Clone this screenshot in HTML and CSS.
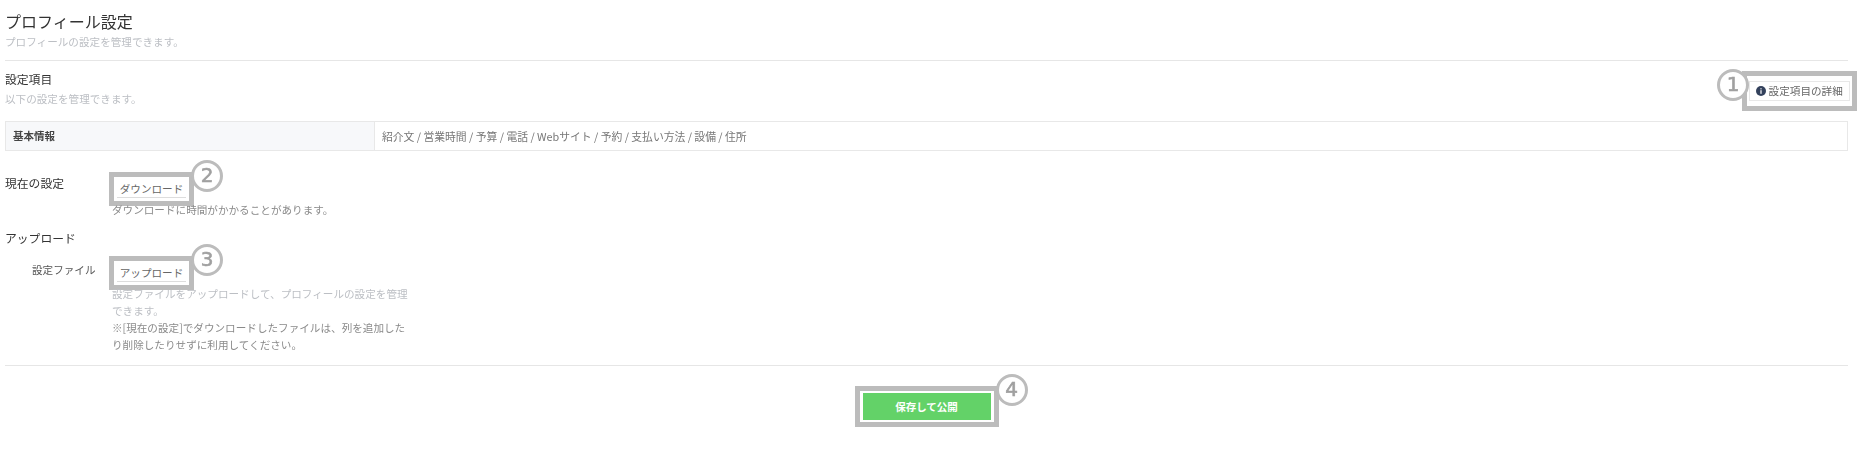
FILE: index.html
```html
<!DOCTYPE html>
<html lang="ja">
<head>
    <meta charset="UTF-8">
    <title>プロフィール設定</title>
    <link rel="stylesheet" href="styles.css">
</head>
<body>
    <div class="page">
        <div class="page-head">
            <h1>プロフィール設定</h1>
            <p class="note">プロフィールの設定を管理できます。</p>
        </div>

        <div class="items-head">
            <div>
                <h2>設定項目</h2>
                <p class="note">以下の設定を管理できます。</p>
            </div>
            <div class="mark mark-detail">
                <span class="num num-left">1</span>
                <button class="btn btn-detail" type="button">
                    <svg class="info" viewBox="0 0 10 10" width="10" height="10"><circle cx="5" cy="5" r="5" fill="#33415c"/><rect x="4.4" y="4.2" width="1.2" height="3.6" fill="#fff"/><rect x="4.4" y="2.2" width="1.2" height="1.2" fill="#fff"/></svg>
                    設定項目の詳細
                </button>
            </div>
        </div>

        <div class="info-table">
            <div class="info-label">基本情報</div>
            <div class="info-value">紹介文 / 営業時間 / 予算 / 電話 / Webサイト / 予約 / 支払い方法 / 設備 / 住所</div>
        </div>

        <div class="row row-current">
            <div class="row-label">現在の設定</div>
            <div class="row-body">
                <div class="mark mark-small">
                    <span class="num num-right">2</span>
                    <button class="btn" type="button">ダウンロード</button>
                </div>
                <p class="note note-dark">ダウンロードに時間がかかることがあります。</p>
            </div>
        </div>

        <h3>アップロード</h3>
        <div class="row row-upload">
            <div class="row-label row-label-sub">設定ファイル</div>
            <div class="row-body">
                <div class="mark mark-small">
                    <span class="num num-right">3</span>
                    <button class="btn" type="button">アップロード</button>
                </div>
                <p class="note help">設定ファイルをアップロードして、プロフィールの設定を管理できます。</p>
                <p class="note note-dark help">※[現在の設定]でダウンロードしたファイルは、列を追加したり削除したりせずに利用してください。</p>
            </div>
        </div>

        <div class="foot">
            <div class="mark mark-save">
                <span class="num num-right">4</span>
                <button class="btn-save" type="button">保存して公開</button>
            </div>
        </div>
    </div>
</body>
</html>
```

FILE: styles.css
```css
body {
    margin: 0;
    background-color: white;
    font-family: "Noto Sans CJK JP", "Noto Sans", sans-serif;
    color: #444;
    font-size: 10.5px;
}

.page {
    padding: 0 26px 0 5px;
    filter: blur(0.45px);
}

p {
    margin: 0;
}

h1 {
    font-weight: 400;
    font-size: 16px;
    line-height: 22px;
    margin: 0;
    color: #333;
}

h2 {
    font-weight: 400;
    font-size: 11.8px;
    line-height: 16px;
    margin: 0;
    color: #333;
}

h3 {
    font-weight: 400;
    font-size: 11.8px;
    line-height: 16px;
    margin: 12px 0 0;
    color: #333;
}

.note {
    font-size: 10.6px;
    line-height: 16.5px;
    color: #bcbfc4;
}

.note-dark {
    color: #8a8a8a;
}

.page-head {
    padding: 10px 0 9px;
    border-bottom: 1px solid #e6e6e6;
}

.page-head .note {
    margin-top: 2px;
}

.items-head {
    display: flex;
    justify-content: space-between;
    align-items: flex-start;
    padding-top: 10px;
    height: 50px;
}

.items-head .note {
    margin-top: 4px;
}

.info-table {
    display: flex;
    height: 30px;
    border: 1px solid #e8e8e8;
    box-sizing: border-box;
}

.info-label {
    width: 369px;
    padding-left: 7px;
    line-height: 28px;
    background-color: #f7f8fa;
    border-right: 1px solid #e8e8e8;
    font-weight: 700;
    color: #444;
    box-sizing: border-box;
}

.info-value {
    padding-left: 7px;
    font-size: 10.8px;
    line-height: 28px;
    color: #777;
}

.row {
    display: flex;
}

.row-current {
    margin-top: 21px;
}

.row-upload {
    margin-top: 10px;
}

.row-label {
    width: 107px;
    font-size: 11.8px;
    line-height: 16px;
    padding-top: 3px;
    color: #333;
}

.row-label-sub {
    padding-left: 27px;
    width: 80px;
    font-size: 10.6px;
    padding-top: 6px;
    color: #555;
}

.row-body {
    width: 301px;
}

.mark {
    position: relative;
    display: inline-flex;
    border: 5px solid #bcbcbc;
    background-color: white;
    box-sizing: border-box;
}

.mark-small {
    display: flex;
    width: 85px;
    height: 34px;
    padding: 3px;
    margin-left: -3px;
}

.mark-detail {
    width: 115px;
    height: 40px;
    padding: 5px 2px;
    margin: 0 -9px 0 0;
}

.mark-save {
    width: 144px;
    height: 41px;
    padding: 2px 3px;
}

.num {
    position: absolute;
    top: -17px;
    width: 32px;
    height: 32px;
    border: 3px solid #bcbcbc;
    border-radius: 50%;
    background-color: white;
    box-sizing: border-box;
    text-align: center;
    font-family: "DejaVu Sans", sans-serif;
    font-size: 20px;
    line-height: 25px;
    color: #a0a0a0;
    -webkit-text-stroke: 0.6px #a0a0a0;
}

.num-right {
    right: -34px;
}

.num-left {
    left: -30px;
    top: -7px;
}

.btn {
    width: 100%;
    padding: 0;
    border: 1px solid #e8e8e8;
    background-color: white;
    font-family: inherit;
    font-size: 10.6px;
    color: #666;
    white-space: nowrap;
}

.mark-small .btn {
    border-width: 0 0 1px;
    border-color: #ddd;
}

.info {
    vertical-align: -1px;
}

.row-body .mark + .note {
    margin-top: -4px;
    position: relative;
}

.row-body .help + .help {
    margin-top: 1px;
}

.foot {
    display: flex;
    justify-content: center;
    margin-top: 12px;
    padding: 20px 0 25px;
    border-top: 1px solid #e6e6e6;
}

.btn-save {
    width: 100%;
    border: 0;
    padding: 0;
    background-color: #63d268;
    font-family: inherit;
    font-size: 10.5px;
    font-weight: 700;
    color: white;
}
```
